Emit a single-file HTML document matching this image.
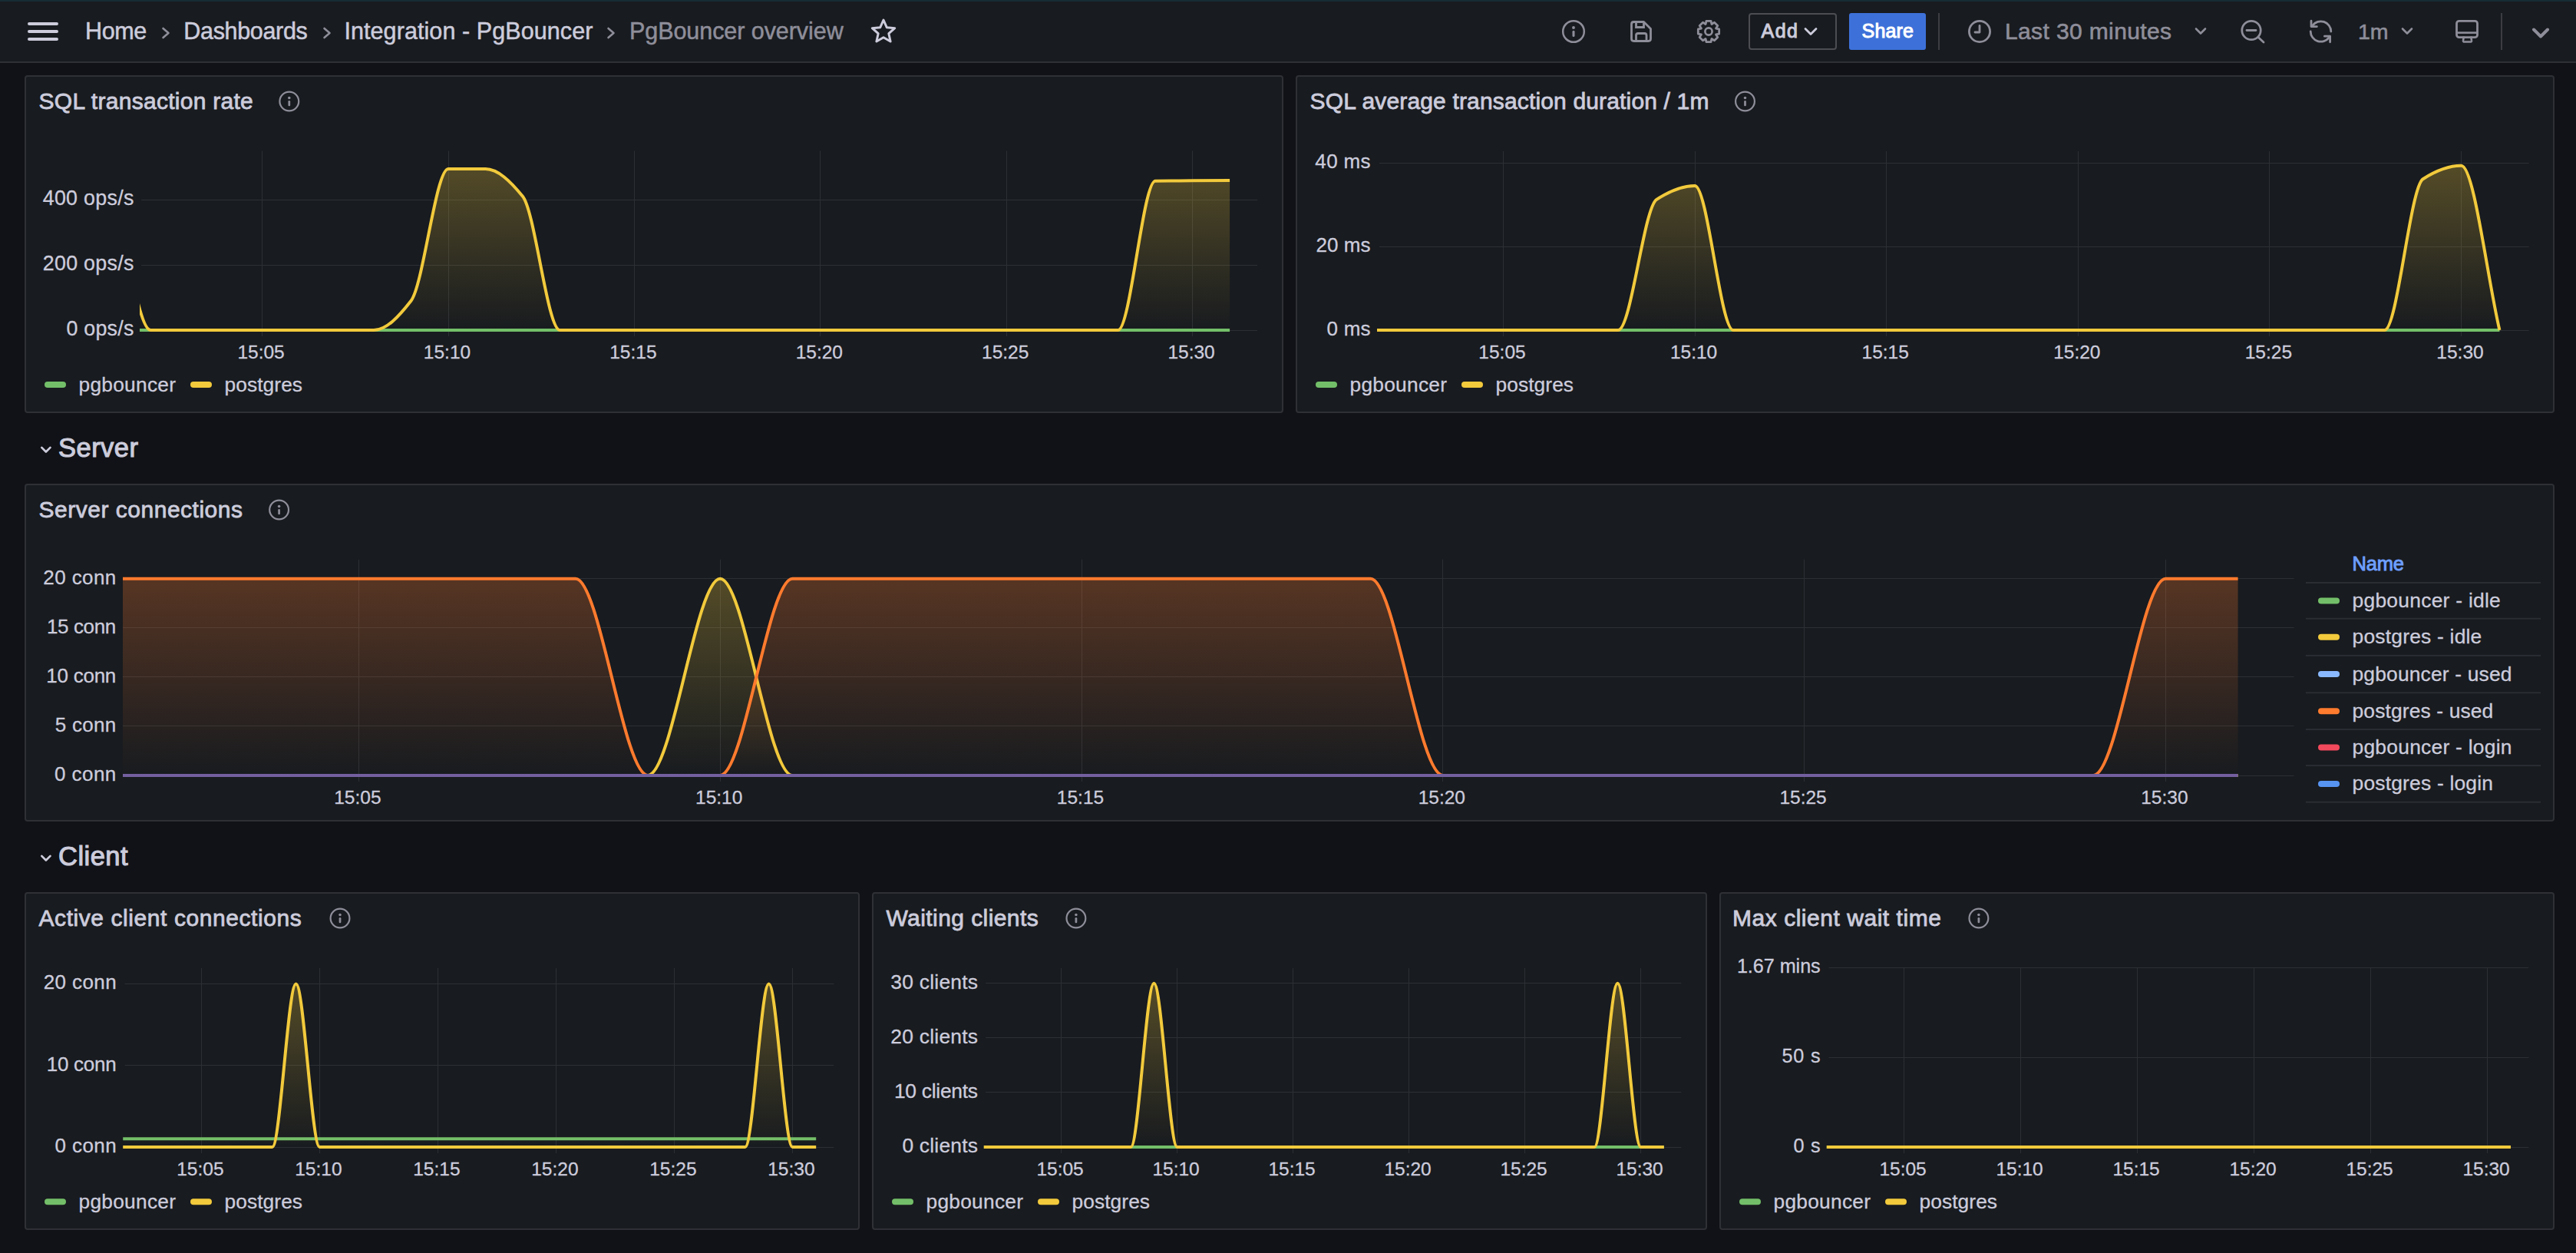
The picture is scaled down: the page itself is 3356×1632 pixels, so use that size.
<!DOCTYPE html>
<html><head><meta charset="utf-8"><title>PgBouncer overview - Dashboards - Grafana</title>
<style>
html,body{margin:0;padding:0;background:#111217;width:3356px;height:1632px;overflow:hidden;font-family:"Liberation Sans",sans-serif;}
</style></head><body>
<svg width="3356" height="1632" viewBox="0 0 3356 1632" style="position:absolute;left:0;top:0" font-family="'Liberation Sans', sans-serif"><defs><clipPath id="c1"><rect x="182" y="192.5" width="1456" height="241.5"/></clipPath><linearGradient id="g2" gradientUnits="userSpaceOnUse" x1="0" y1="196.5" x2="0" y2="430"><stop offset="0" stop-color="#73bf69" stop-opacity="0.3"/><stop offset="1" stop-color="#73bf69" stop-opacity="0"/></linearGradient><linearGradient id="g3" gradientUnits="userSpaceOnUse" x1="0" y1="196.5" x2="0" y2="430"><stop offset="0" stop-color="#f2ca3c" stop-opacity="0.3"/><stop offset="1" stop-color="#f2ca3c" stop-opacity="0"/></linearGradient><clipPath id="c4"><rect x="1794" y="193" width="1500.5" height="241"/></clipPath><linearGradient id="g5" gradientUnits="userSpaceOnUse" x1="0" y1="197" x2="0" y2="430"><stop offset="0" stop-color="#73bf69" stop-opacity="0.3"/><stop offset="1" stop-color="#73bf69" stop-opacity="0"/></linearGradient><linearGradient id="g6" gradientUnits="userSpaceOnUse" x1="0" y1="197" x2="0" y2="430"><stop offset="0" stop-color="#f2ca3c" stop-opacity="0.3"/><stop offset="1" stop-color="#f2ca3c" stop-opacity="0"/></linearGradient><clipPath id="c7"><rect x="160" y="724.7" width="2828.5" height="289.29999999999995"/></clipPath><linearGradient id="g8" gradientUnits="userSpaceOnUse" x1="0" y1="728.7" x2="0" y2="1010"><stop offset="0" stop-color="#f2ca3c" stop-opacity="0.3"/><stop offset="1" stop-color="#f2ca3c" stop-opacity="0"/></linearGradient><linearGradient id="g9" gradientUnits="userSpaceOnUse" x1="0" y1="728.7" x2="0" y2="1010"><stop offset="0" stop-color="#ff7b2e" stop-opacity="0.3"/><stop offset="1" stop-color="#ff7b2e" stop-opacity="0"/></linearGradient><clipPath id="c10"><rect x="160.2" y="1257" width="926.0999999999999" height="241"/></clipPath><linearGradient id="g11" gradientUnits="userSpaceOnUse" x1="0" y1="1261" x2="0" y2="1494"><stop offset="0" stop-color="#73bf69" stop-opacity="0.3"/><stop offset="1" stop-color="#73bf69" stop-opacity="0"/></linearGradient><linearGradient id="g12" gradientUnits="userSpaceOnUse" x1="0" y1="1261" x2="0" y2="1494"><stop offset="0" stop-color="#f2ca3c" stop-opacity="0.3"/><stop offset="1" stop-color="#f2ca3c" stop-opacity="0"/></linearGradient><clipPath id="c13"><rect x="1281.8" y="1257" width="908.5000000000002" height="241"/></clipPath><linearGradient id="g14" gradientUnits="userSpaceOnUse" x1="0" y1="1261" x2="0" y2="1494"><stop offset="0" stop-color="#73bf69" stop-opacity="0.3"/><stop offset="1" stop-color="#73bf69" stop-opacity="0"/></linearGradient><linearGradient id="g15" gradientUnits="userSpaceOnUse" x1="0" y1="1261" x2="0" y2="1494"><stop offset="0" stop-color="#f2ca3c" stop-opacity="0.3"/><stop offset="1" stop-color="#f2ca3c" stop-opacity="0"/></linearGradient><clipPath id="c16"><rect x="2379.8" y="1256" width="914.5" height="242"/></clipPath><linearGradient id="g17" gradientUnits="userSpaceOnUse" x1="0" y1="1260" x2="0" y2="1494"><stop offset="0" stop-color="#73bf69" stop-opacity="0.3"/><stop offset="1" stop-color="#73bf69" stop-opacity="0"/></linearGradient><linearGradient id="g18" gradientUnits="userSpaceOnUse" x1="0" y1="1260" x2="0" y2="1494"><stop offset="0" stop-color="#f2ca3c" stop-opacity="0.3"/><stop offset="1" stop-color="#f2ca3c" stop-opacity="0"/></linearGradient></defs><rect x="0" y="82" width="3356" height="1550" fill="#111217"/><rect x="33" y="99" width="1638" height="438" rx="3" ry="3" fill="#181b1f" stroke="#2e3036" stroke-width="2"/><text x="50.5" y="142.2" font-size="30" fill="#ccccdc" text-anchor="start" stroke="#ccccdc" stroke-width="0.8" textLength="279.3" lengthAdjust="spacing">SQL transaction rate</text><circle cx="376.8" cy="132" r="12.4" fill="none" stroke="#8e8e9a" stroke-width="2.2"/><circle cx="376.8" cy="127.56422764227642" r="1.76" fill="#8e8e9a"/><line x1="376.8" y1="132.30" x2="376.8" y2="136.94" stroke="#8e8e9a" stroke-width="2.72" stroke-linecap="round"/><rect x="1689" y="99" width="1638" height="438" rx="3" ry="3" fill="#181b1f" stroke="#2e3036" stroke-width="2"/><text x="1706.5" y="142.2" font-size="30" fill="#ccccdc" text-anchor="start" stroke="#ccccdc" stroke-width="0.8" textLength="519.9" lengthAdjust="spacing">SQL average transaction duration / 1m</text><circle cx="2273.5" cy="132" r="12.4" fill="none" stroke="#8e8e9a" stroke-width="2.2"/><circle cx="2273.5" cy="127.56422764227642" r="1.76" fill="#8e8e9a"/><line x1="2273.5" y1="132.30" x2="2273.5" y2="136.94" stroke="#8e8e9a" stroke-width="2.72" stroke-linecap="round"/><rect x="33" y="631" width="3294" height="438" rx="3" ry="3" fill="#181b1f" stroke="#2e3036" stroke-width="2"/><text x="50.5" y="674.2" font-size="30" fill="#ccccdc" text-anchor="start" stroke="#ccccdc" stroke-width="0.8" textLength="265.5" lengthAdjust="spacing">Server connections</text><circle cx="363.6" cy="664" r="12.4" fill="none" stroke="#8e8e9a" stroke-width="2.2"/><circle cx="363.6" cy="659.5642276422765" r="1.76" fill="#8e8e9a"/><line x1="363.6" y1="664.30" x2="363.6" y2="668.94" stroke="#8e8e9a" stroke-width="2.72" stroke-linecap="round"/><rect x="33" y="1163" width="1086" height="438" rx="3" ry="3" fill="#181b1f" stroke="#2e3036" stroke-width="2"/><text x="50.5" y="1206.2" font-size="30" fill="#ccccdc" text-anchor="start" stroke="#ccccdc" stroke-width="0.8" textLength="342.2" lengthAdjust="spacing">Active client connections</text><circle cx="443" cy="1196" r="12.4" fill="none" stroke="#8e8e9a" stroke-width="2.2"/><circle cx="443" cy="1191.5642276422764" r="1.76" fill="#8e8e9a"/><line x1="443" y1="1196.30" x2="443" y2="1200.94" stroke="#8e8e9a" stroke-width="2.72" stroke-linecap="round"/><rect x="1137" y="1163" width="1086" height="438" rx="3" ry="3" fill="#181b1f" stroke="#2e3036" stroke-width="2"/><text x="1154.5" y="1206.2" font-size="30" fill="#ccccdc" text-anchor="start" stroke="#ccccdc" stroke-width="0.8" textLength="198.2" lengthAdjust="spacing">Waiting clients</text><circle cx="1401.9" cy="1196" r="12.4" fill="none" stroke="#8e8e9a" stroke-width="2.2"/><circle cx="1401.9" cy="1191.5642276422764" r="1.76" fill="#8e8e9a"/><line x1="1401.9" y1="1196.30" x2="1401.9" y2="1200.94" stroke="#8e8e9a" stroke-width="2.72" stroke-linecap="round"/><rect x="2241" y="1163" width="1086" height="438" rx="3" ry="3" fill="#181b1f" stroke="#2e3036" stroke-width="2"/><text x="2257.0" y="1206.2" font-size="30" fill="#ccccdc" text-anchor="start" stroke="#ccccdc" stroke-width="0.8" textLength="271.9" lengthAdjust="spacing">Max client wait time</text><circle cx="2577.9" cy="1196" r="12.4" fill="none" stroke="#8e8e9a" stroke-width="2.2"/><circle cx="2577.9" cy="1191.5642276422764" r="1.76" fill="#8e8e9a"/><line x1="2577.9" y1="1196.30" x2="2577.9" y2="1200.94" stroke="#8e8e9a" stroke-width="2.72" stroke-linecap="round"/><path d="M54.3,582.9 L59.9,588.5 L65.5,582.9" fill="none" stroke="#ccccdc" stroke-width="2.7" stroke-linecap="round" stroke-linejoin="round"/><text x="76.0" y="595.2" font-size="34.5" fill="#ccccdc" text-anchor="start" stroke="#ccccdc" stroke-width="1.1" textLength="104" lengthAdjust="spacing">Server</text><path d="M54.3,1114.9 L59.9,1120.5 L65.5,1114.9" fill="none" stroke="#ccccdc" stroke-width="2.7" stroke-linecap="round" stroke-linejoin="round"/><text x="76.0" y="1127.2" font-size="34.5" fill="#ccccdc" text-anchor="start" stroke="#ccccdc" stroke-width="1.1" textLength="90.5" lengthAdjust="spacing">Client</text><line x1="184" y1="430.5" x2="1638" y2="430.5" stroke="#2c2f34" stroke-width="1"/><text x="174.3" y="436.8" font-size="26.8" fill="#ccccdc" text-anchor="end" stroke="#ccccdc" stroke-width="0.3" textLength="87.8" lengthAdjust="spacing">0 ops/s</text><line x1="184" y1="345.5" x2="1638" y2="345.5" stroke="#2c2f34" stroke-width="1"/><text x="174.3" y="351.8" font-size="26.8" fill="#ccccdc" text-anchor="end" stroke="#ccccdc" stroke-width="0.3" textLength="118.5" lengthAdjust="spacing">200 ops/s</text><line x1="184" y1="260.5" x2="1638" y2="260.5" stroke="#2c2f34" stroke-width="1"/><text x="174.3" y="266.8" font-size="26.8" fill="#ccccdc" text-anchor="end" stroke="#ccccdc" stroke-width="0.3" textLength="118.6" lengthAdjust="spacing">400 ops/s</text><line x1="341.5" y1="196.5" x2="341.5" y2="438" stroke="#2c2f34" stroke-width="1"/><text x="340.1" y="467.2" font-size="24.5" fill="#ccccdc" text-anchor="middle" stroke="#ccccdc" stroke-width="0.3">15:05</text><line x1="584.5" y1="196.5" x2="584.5" y2="438" stroke="#2c2f34" stroke-width="1"/><text x="582.5" y="467.2" font-size="24.5" fill="#ccccdc" text-anchor="middle" stroke="#ccccdc" stroke-width="0.3">15:10</text><line x1="826.5" y1="196.5" x2="826.5" y2="438" stroke="#2c2f34" stroke-width="1"/><text x="824.9" y="467.2" font-size="24.5" fill="#ccccdc" text-anchor="middle" stroke="#ccccdc" stroke-width="0.3">15:15</text><line x1="1068.5" y1="196.5" x2="1068.5" y2="438" stroke="#2c2f34" stroke-width="1"/><text x="1067.3" y="467.2" font-size="24.5" fill="#ccccdc" text-anchor="middle" stroke="#ccccdc" stroke-width="0.3">15:20</text><line x1="1311.5" y1="196.5" x2="1311.5" y2="438" stroke="#2c2f34" stroke-width="1"/><text x="1309.7" y="467.2" font-size="24.5" fill="#ccccdc" text-anchor="middle" stroke="#ccccdc" stroke-width="0.3">15:25</text><line x1="1553.5" y1="196.5" x2="1553.5" y2="438" stroke="#2c2f34" stroke-width="1"/><text x="1552.1" y="467.2" font-size="24.5" fill="#ccccdc" text-anchor="middle" stroke="#ccccdc" stroke-width="0.3">15:30</text><g clip-path="url(#c1)"><path d="M147.68,430.00C163.84,430.00 180.00,430.00 196.16,430.00C212.32,430.00 228.48,430.00 244.64,430.00C260.80,430.00 276.96,430.00 293.12,430.00C309.28,430.00 325.44,430.00 341.60,430.00C357.76,430.00 373.92,430.00 390.08,430.00C406.24,430.00 422.40,430.00 438.56,430.00C454.72,430.00 470.88,430.00 487.04,430.00C503.20,430.00 519.36,430.00 535.52,430.00C551.68,430.00 567.84,430.00 584.00,430.00C600.16,430.00 616.32,430.00 632.48,430.00C648.64,430.00 664.80,430.00 680.96,430.00C697.12,430.00 713.28,430.00 729.44,430.00C745.60,430.00 761.76,430.00 777.92,430.00C794.08,430.00 810.24,430.00 826.40,430.00C842.56,430.00 858.72,430.00 874.88,430.00C891.04,430.00 907.20,430.00 923.36,430.00C939.52,430.00 955.68,430.00 971.84,430.00C988.00,430.00 1004.16,430.00 1020.32,430.00C1036.48,430.00 1052.64,430.00 1068.80,430.00C1084.96,430.00 1101.12,430.00 1117.28,430.00C1133.44,430.00 1149.60,430.00 1165.76,430.00C1181.92,430.00 1198.08,430.00 1214.24,430.00C1230.40,430.00 1246.56,430.00 1262.72,430.00C1278.88,430.00 1295.04,430.00 1311.20,430.00C1327.36,430.00 1343.52,430.00 1359.68,430.00C1375.84,430.00 1392.00,430.00 1408.16,430.00C1424.32,430.00 1440.48,430.00 1456.64,430.00C1472.80,430.00 1488.96,430.00 1505.12,430.00C1521.28,430.00 1537.44,430.00 1553.60,430.00C1569.76,430.00 1585.92,430.00 1602.08,430.00L1602.08,430.00L147.68,430.00Z" fill="url(#g2)"/><path d="M147.68,430.00C163.84,430.00 180.00,430.00 196.16,430.00C212.32,430.00 228.48,430.00 244.64,430.00C260.80,430.00 276.96,430.00 293.12,430.00C309.28,430.00 325.44,430.00 341.60,430.00C357.76,430.00 373.92,430.00 390.08,430.00C406.24,430.00 422.40,430.00 438.56,430.00C454.72,430.00 470.88,430.00 487.04,430.00C503.20,430.00 519.36,430.00 535.52,430.00C551.68,430.00 567.84,430.00 584.00,430.00C600.16,430.00 616.32,430.00 632.48,430.00C648.64,430.00 664.80,430.00 680.96,430.00C697.12,430.00 713.28,430.00 729.44,430.00C745.60,430.00 761.76,430.00 777.92,430.00C794.08,430.00 810.24,430.00 826.40,430.00C842.56,430.00 858.72,430.00 874.88,430.00C891.04,430.00 907.20,430.00 923.36,430.00C939.52,430.00 955.68,430.00 971.84,430.00C988.00,430.00 1004.16,430.00 1020.32,430.00C1036.48,430.00 1052.64,430.00 1068.80,430.00C1084.96,430.00 1101.12,430.00 1117.28,430.00C1133.44,430.00 1149.60,430.00 1165.76,430.00C1181.92,430.00 1198.08,430.00 1214.24,430.00C1230.40,430.00 1246.56,430.00 1262.72,430.00C1278.88,430.00 1295.04,430.00 1311.20,430.00C1327.36,430.00 1343.52,430.00 1359.68,430.00C1375.84,430.00 1392.00,430.00 1408.16,430.00C1424.32,430.00 1440.48,430.00 1456.64,430.00C1472.80,430.00 1488.96,430.00 1505.12,430.00C1521.28,430.00 1537.44,430.00 1553.60,430.00C1569.76,430.00 1585.92,430.00 1602.08,430.00" fill="none" stroke="#73bf69" stroke-width="4" stroke-linejoin="round"/><path d="M147.68,243.00C163.84,305.33 180.00,430.00 196.16,430.00C212.32,430.00 228.48,430.00 244.64,430.00C260.80,430.00 276.96,430.00 293.12,430.00C309.28,430.00 325.44,430.00 341.60,430.00C357.76,430.00 373.92,430.00 390.08,430.00C406.24,430.00 422.40,430.00 438.56,430.00C454.72,430.00 470.88,430.00 487.04,430.00C503.20,430.00 519.36,412.60 535.52,391.75C551.68,370.90 567.84,220.05 584.00,220.05C600.16,220.05 616.32,220.05 632.48,220.05C648.64,220.05 664.80,236.00 680.96,255.75C697.12,275.50 713.28,430.00 729.44,430.00C745.60,430.00 761.76,430.00 777.92,430.00C794.08,430.00 810.24,430.00 826.40,430.00C842.56,430.00 858.72,430.00 874.88,430.00C891.04,430.00 907.20,430.00 923.36,430.00C939.52,430.00 955.68,430.00 971.84,430.00C988.00,430.00 1004.16,430.00 1020.32,430.00C1036.48,430.00 1052.64,430.00 1068.80,430.00C1084.96,430.00 1101.12,430.00 1117.28,430.00C1133.44,430.00 1149.60,430.00 1165.76,430.00C1181.92,430.00 1198.08,430.00 1214.24,430.00C1230.40,430.00 1246.56,430.00 1262.72,430.00C1278.88,430.00 1295.04,430.00 1311.20,430.00C1327.36,430.00 1343.52,430.00 1359.68,430.00C1375.84,430.00 1392.00,430.00 1408.16,430.00C1424.32,430.00 1440.48,430.00 1456.64,430.00C1472.80,430.00 1488.96,236.06 1505.12,235.78C1521.28,235.49 1537.44,235.49 1553.60,235.35C1569.76,235.21 1585.92,235.07 1602.08,234.93L1602.08,430.00L147.68,430.00Z" fill="url(#g3)"/><path d="M147.68,243.00C163.84,305.33 180.00,430.00 196.16,430.00C212.32,430.00 228.48,430.00 244.64,430.00C260.80,430.00 276.96,430.00 293.12,430.00C309.28,430.00 325.44,430.00 341.60,430.00C357.76,430.00 373.92,430.00 390.08,430.00C406.24,430.00 422.40,430.00 438.56,430.00C454.72,430.00 470.88,430.00 487.04,430.00C503.20,430.00 519.36,412.60 535.52,391.75C551.68,370.90 567.84,220.05 584.00,220.05C600.16,220.05 616.32,220.05 632.48,220.05C648.64,220.05 664.80,236.00 680.96,255.75C697.12,275.50 713.28,430.00 729.44,430.00C745.60,430.00 761.76,430.00 777.92,430.00C794.08,430.00 810.24,430.00 826.40,430.00C842.56,430.00 858.72,430.00 874.88,430.00C891.04,430.00 907.20,430.00 923.36,430.00C939.52,430.00 955.68,430.00 971.84,430.00C988.00,430.00 1004.16,430.00 1020.32,430.00C1036.48,430.00 1052.64,430.00 1068.80,430.00C1084.96,430.00 1101.12,430.00 1117.28,430.00C1133.44,430.00 1149.60,430.00 1165.76,430.00C1181.92,430.00 1198.08,430.00 1214.24,430.00C1230.40,430.00 1246.56,430.00 1262.72,430.00C1278.88,430.00 1295.04,430.00 1311.20,430.00C1327.36,430.00 1343.52,430.00 1359.68,430.00C1375.84,430.00 1392.00,430.00 1408.16,430.00C1424.32,430.00 1440.48,430.00 1456.64,430.00C1472.80,430.00 1488.96,236.06 1505.12,235.78C1521.28,235.49 1537.44,235.49 1553.60,235.35C1569.76,235.21 1585.92,235.07 1602.08,234.93" fill="none" stroke="#f2ca3c" stroke-width="4" stroke-linejoin="round"/></g><rect x="58" y="497" width="28" height="8" rx="4" ry="4" fill="#73bf69"/><text x="102.5" y="509.5" font-size="26.3" fill="#ccccdc" text-anchor="start" stroke="#ccccdc" stroke-width="0.3" textLength="126.5" lengthAdjust="spacing">pgbouncer</text><rect x="248" y="497" width="28" height="8" rx="4" ry="4" fill="#f2ca3c"/><text x="292.5" y="509.5" font-size="26.3" fill="#ccccdc" text-anchor="start" stroke="#ccccdc" stroke-width="0.3" textLength="101.5" lengthAdjust="spacing">postgres</text><line x1="1797" y1="430.5" x2="3294.5" y2="430.5" stroke="#2c2f34" stroke-width="1"/><text x="1785.6" y="436.8" font-size="26" fill="#ccccdc" text-anchor="end" stroke="#ccccdc" stroke-width="0.3" textLength="57.2" lengthAdjust="spacing">0 ms</text><line x1="1797" y1="321.5" x2="3294.5" y2="321.5" stroke="#2c2f34" stroke-width="1"/><text x="1785.6" y="328.1" font-size="26" fill="#ccccdc" text-anchor="end" stroke="#ccccdc" stroke-width="0.3" textLength="71.2" lengthAdjust="spacing">20 ms</text><line x1="1797" y1="212.5" x2="3294.5" y2="212.5" stroke="#2c2f34" stroke-width="1"/><text x="1785.6" y="219.4" font-size="26" fill="#ccccdc" text-anchor="end" stroke="#ccccdc" stroke-width="0.3" textLength="72.3" lengthAdjust="spacing">40 ms</text><line x1="1958.5" y1="197" x2="1958.5" y2="438" stroke="#2c2f34" stroke-width="1"/><text x="1957.0" y="467.2" font-size="24.5" fill="#ccccdc" text-anchor="middle" stroke="#ccccdc" stroke-width="0.3">15:05</text><line x1="2208.5" y1="197" x2="2208.5" y2="438" stroke="#2c2f34" stroke-width="1"/><text x="2206.6" y="467.2" font-size="24.5" fill="#ccccdc" text-anchor="middle" stroke="#ccccdc" stroke-width="0.3">15:10</text><line x1="2457.5" y1="197" x2="2457.5" y2="438" stroke="#2c2f34" stroke-width="1"/><text x="2456.2" y="467.2" font-size="24.5" fill="#ccccdc" text-anchor="middle" stroke="#ccccdc" stroke-width="0.3">15:15</text><line x1="2707.5" y1="197" x2="2707.5" y2="438" stroke="#2c2f34" stroke-width="1"/><text x="2705.8" y="467.2" font-size="24.5" fill="#ccccdc" text-anchor="middle" stroke="#ccccdc" stroke-width="0.3">15:20</text><line x1="2956.5" y1="197" x2="2956.5" y2="438" stroke="#2c2f34" stroke-width="1"/><text x="2955.4" y="467.2" font-size="24.5" fill="#ccccdc" text-anchor="middle" stroke="#ccccdc" stroke-width="0.3">15:25</text><line x1="3206.5" y1="197" x2="3206.5" y2="438" stroke="#2c2f34" stroke-width="1"/><text x="3205.0" y="467.2" font-size="24.5" fill="#ccccdc" text-anchor="middle" stroke="#ccccdc" stroke-width="0.3">15:30</text><g clip-path="url(#c4)"><path d="M1758.82,430.00C1775.46,430.00 1792.10,430.00 1808.74,430.00C1825.38,430.00 1842.02,430.00 1858.66,430.00C1875.30,430.00 1891.94,430.00 1908.58,430.00C1925.22,430.00 1941.86,430.00 1958.50,430.00C1975.14,430.00 1991.78,430.00 2008.42,430.00C2025.06,430.00 2041.70,430.00 2058.34,430.00C2074.98,430.00 2091.62,430.00 2108.26,430.00C2124.90,430.00 2141.54,430.00 2158.18,430.00C2174.82,430.00 2191.46,430.00 2208.10,430.00C2224.74,430.00 2241.38,430.00 2258.02,430.00C2274.66,430.00 2291.30,430.00 2307.94,430.00C2324.58,430.00 2341.22,430.00 2357.86,430.00C2374.50,430.00 2391.14,430.00 2407.78,430.00C2424.42,430.00 2441.06,430.00 2457.70,430.00C2474.34,430.00 2490.98,430.00 2507.62,430.00C2524.26,430.00 2540.90,430.00 2557.54,430.00C2574.18,430.00 2590.82,430.00 2607.46,430.00C2624.10,430.00 2640.74,430.00 2657.38,430.00C2674.02,430.00 2690.66,430.00 2707.30,430.00C2723.94,430.00 2740.58,430.00 2757.22,430.00C2773.86,430.00 2790.50,430.00 2807.14,430.00C2823.78,430.00 2840.42,430.00 2857.06,430.00C2873.70,430.00 2890.34,430.00 2906.98,430.00C2923.62,430.00 2940.26,430.00 2956.90,430.00C2973.54,430.00 2990.18,430.00 3006.82,430.00C3023.46,430.00 3040.10,430.00 3056.74,430.00C3073.38,430.00 3090.02,430.00 3106.66,430.00C3123.30,430.00 3139.94,430.00 3156.58,430.00C3173.22,430.00 3189.86,430.00 3206.50,430.00C3223.14,430.00 3239.78,430.00 3256.42,430.00L3256.42,430.00L1758.82,430.00Z" fill="url(#g5)"/><path d="M1758.82,430.00C1775.46,430.00 1792.10,430.00 1808.74,430.00C1825.38,430.00 1842.02,430.00 1858.66,430.00C1875.30,430.00 1891.94,430.00 1908.58,430.00C1925.22,430.00 1941.86,430.00 1958.50,430.00C1975.14,430.00 1991.78,430.00 2008.42,430.00C2025.06,430.00 2041.70,430.00 2058.34,430.00C2074.98,430.00 2091.62,430.00 2108.26,430.00C2124.90,430.00 2141.54,430.00 2158.18,430.00C2174.82,430.00 2191.46,430.00 2208.10,430.00C2224.74,430.00 2241.38,430.00 2258.02,430.00C2274.66,430.00 2291.30,430.00 2307.94,430.00C2324.58,430.00 2341.22,430.00 2357.86,430.00C2374.50,430.00 2391.14,430.00 2407.78,430.00C2424.42,430.00 2441.06,430.00 2457.70,430.00C2474.34,430.00 2490.98,430.00 2507.62,430.00C2524.26,430.00 2540.90,430.00 2557.54,430.00C2574.18,430.00 2590.82,430.00 2607.46,430.00C2624.10,430.00 2640.74,430.00 2657.38,430.00C2674.02,430.00 2690.66,430.00 2707.30,430.00C2723.94,430.00 2740.58,430.00 2757.22,430.00C2773.86,430.00 2790.50,430.00 2807.14,430.00C2823.78,430.00 2840.42,430.00 2857.06,430.00C2873.70,430.00 2890.34,430.00 2906.98,430.00C2923.62,430.00 2940.26,430.00 2956.90,430.00C2973.54,430.00 2990.18,430.00 3006.82,430.00C3023.46,430.00 3040.10,430.00 3056.74,430.00C3073.38,430.00 3090.02,430.00 3106.66,430.00C3123.30,430.00 3139.94,430.00 3156.58,430.00C3173.22,430.00 3189.86,430.00 3206.50,430.00C3223.14,430.00 3239.78,430.00 3256.42,430.00" fill="none" stroke="#73bf69" stroke-width="4" stroke-linejoin="round"/><path d="M1758.82,430.00C1775.46,430.00 1792.10,430.00 1808.74,430.00C1825.38,430.00 1842.02,430.00 1858.66,430.00C1875.30,430.00 1891.94,430.00 1908.58,430.00C1925.22,430.00 1941.86,430.00 1958.50,430.00C1975.14,430.00 1991.78,430.00 2008.42,430.00C2025.06,430.00 2041.70,430.00 2058.34,430.00C2074.98,430.00 2091.62,430.00 2108.26,430.00C2124.90,430.00 2141.54,270.70 2158.18,259.88C2174.82,249.07 2191.46,241.95 2208.10,241.95C2224.74,241.95 2241.38,430.00 2258.02,430.00C2274.66,430.00 2291.30,430.00 2307.94,430.00C2324.58,430.00 2341.22,430.00 2357.86,430.00C2374.50,430.00 2391.14,430.00 2407.78,430.00C2424.42,430.00 2441.06,430.00 2457.70,430.00C2474.34,430.00 2490.98,430.00 2507.62,430.00C2524.26,430.00 2540.90,430.00 2557.54,430.00C2574.18,430.00 2590.82,430.00 2607.46,430.00C2624.10,430.00 2640.74,430.00 2657.38,430.00C2674.02,430.00 2690.66,430.00 2707.30,430.00C2723.94,430.00 2740.58,430.00 2757.22,430.00C2773.86,430.00 2790.50,430.00 2807.14,430.00C2823.78,430.00 2840.42,430.00 2857.06,430.00C2873.70,430.00 2890.34,430.00 2906.98,430.00C2923.62,430.00 2940.26,430.00 2956.90,430.00C2973.54,430.00 2990.18,430.00 3006.82,430.00C3023.46,430.00 3040.10,430.00 3056.74,430.00C3073.38,430.00 3090.02,430.00 3106.66,430.00C3123.30,430.00 3139.94,243.91 3156.58,233.25C3173.22,222.60 3189.86,215.86 3206.50,215.86C3223.14,215.86 3239.78,358.62 3256.42,430.00L3256.42,430.00L1758.82,430.00Z" fill="url(#g6)"/><path d="M1758.82,430.00C1775.46,430.00 1792.10,430.00 1808.74,430.00C1825.38,430.00 1842.02,430.00 1858.66,430.00C1875.30,430.00 1891.94,430.00 1908.58,430.00C1925.22,430.00 1941.86,430.00 1958.50,430.00C1975.14,430.00 1991.78,430.00 2008.42,430.00C2025.06,430.00 2041.70,430.00 2058.34,430.00C2074.98,430.00 2091.62,430.00 2108.26,430.00C2124.90,430.00 2141.54,270.70 2158.18,259.88C2174.82,249.07 2191.46,241.95 2208.10,241.95C2224.74,241.95 2241.38,430.00 2258.02,430.00C2274.66,430.00 2291.30,430.00 2307.94,430.00C2324.58,430.00 2341.22,430.00 2357.86,430.00C2374.50,430.00 2391.14,430.00 2407.78,430.00C2424.42,430.00 2441.06,430.00 2457.70,430.00C2474.34,430.00 2490.98,430.00 2507.62,430.00C2524.26,430.00 2540.90,430.00 2557.54,430.00C2574.18,430.00 2590.82,430.00 2607.46,430.00C2624.10,430.00 2640.74,430.00 2657.38,430.00C2674.02,430.00 2690.66,430.00 2707.30,430.00C2723.94,430.00 2740.58,430.00 2757.22,430.00C2773.86,430.00 2790.50,430.00 2807.14,430.00C2823.78,430.00 2840.42,430.00 2857.06,430.00C2873.70,430.00 2890.34,430.00 2906.98,430.00C2923.62,430.00 2940.26,430.00 2956.90,430.00C2973.54,430.00 2990.18,430.00 3006.82,430.00C3023.46,430.00 3040.10,430.00 3056.74,430.00C3073.38,430.00 3090.02,430.00 3106.66,430.00C3123.30,430.00 3139.94,243.91 3156.58,233.25C3173.22,222.60 3189.86,215.86 3206.50,215.86C3223.14,215.86 3239.78,358.62 3256.42,430.00" fill="none" stroke="#f2ca3c" stroke-width="4" stroke-linejoin="round"/></g><rect x="1714" y="497" width="28" height="8" rx="4" ry="4" fill="#73bf69"/><text x="1758.5" y="509.5" font-size="26.3" fill="#ccccdc" text-anchor="start" stroke="#ccccdc" stroke-width="0.3" textLength="126.5" lengthAdjust="spacing">pgbouncer</text><rect x="1904" y="497" width="28" height="8" rx="4" ry="4" fill="#f2ca3c"/><text x="1948.5" y="509.5" font-size="26.3" fill="#ccccdc" text-anchor="start" stroke="#ccccdc" stroke-width="0.3" textLength="101.5" lengthAdjust="spacing">postgres</text><line x1="160" y1="1010.5" x2="2988.5" y2="1010.5" stroke="#2c2f34" stroke-width="1"/><text x="151.3" y="1016.8" font-size="26" fill="#ccccdc" text-anchor="end" stroke="#ccccdc" stroke-width="0.3" textLength="80.3" lengthAdjust="spacing">0 conn</text><line x1="160" y1="945.5" x2="2988.5" y2="945.5" stroke="#2c2f34" stroke-width="1"/><text x="151.3" y="952.8" font-size="26" fill="#ccccdc" text-anchor="end" stroke="#ccccdc" stroke-width="0.3" textLength="79.5" lengthAdjust="spacing">5 conn</text><line x1="160" y1="881.5" x2="2988.5" y2="881.5" stroke="#2c2f34" stroke-width="1"/><text x="151.3" y="888.7" font-size="26" fill="#ccccdc" text-anchor="end" stroke="#ccccdc" stroke-width="0.3" textLength="91.0" lengthAdjust="spacing">10 conn</text><line x1="160" y1="817.5" x2="2988.5" y2="817.5" stroke="#2c2f34" stroke-width="1"/><text x="151.3" y="824.6" font-size="26" fill="#ccccdc" text-anchor="end" stroke="#ccccdc" stroke-width="0.3" textLength="90.4" lengthAdjust="spacing">15 conn</text><line x1="160" y1="753.5" x2="2988.5" y2="753.5" stroke="#2c2f34" stroke-width="1"/><text x="151.3" y="760.6" font-size="26" fill="#ccccdc" text-anchor="end" stroke="#ccccdc" stroke-width="0.3" textLength="95.0" lengthAdjust="spacing">20 conn</text><line x1="467.5" y1="728.7" x2="467.5" y2="1018" stroke="#2c2f34" stroke-width="1"/><text x="465.9" y="1047.2" font-size="24.5" fill="#ccccdc" text-anchor="middle" stroke="#ccccdc" stroke-width="0.3">15:05</text><line x1="938.5" y1="728.7" x2="938.5" y2="1018" stroke="#2c2f34" stroke-width="1"/><text x="936.7" y="1047.2" font-size="24.5" fill="#ccccdc" text-anchor="middle" stroke="#ccccdc" stroke-width="0.3">15:10</text><line x1="1409.5" y1="728.7" x2="1409.5" y2="1018" stroke="#2c2f34" stroke-width="1"/><text x="1407.5" y="1047.2" font-size="24.5" fill="#ccccdc" text-anchor="middle" stroke="#ccccdc" stroke-width="0.3">15:15</text><line x1="1879.5" y1="728.7" x2="1879.5" y2="1018" stroke="#2c2f34" stroke-width="1"/><text x="1878.3" y="1047.2" font-size="24.5" fill="#ccccdc" text-anchor="middle" stroke="#ccccdc" stroke-width="0.3">15:20</text><line x1="2350.5" y1="728.7" x2="2350.5" y2="1018" stroke="#2c2f34" stroke-width="1"/><text x="2349.1" y="1047.2" font-size="24.5" fill="#ccccdc" text-anchor="middle" stroke="#ccccdc" stroke-width="0.3">15:25</text><line x1="2821.5" y1="728.7" x2="2821.5" y2="1018" stroke="#2c2f34" stroke-width="1"/><text x="2819.9" y="1047.2" font-size="24.5" fill="#ccccdc" text-anchor="middle" stroke="#ccccdc" stroke-width="0.3">15:30</text><g clip-path="url(#c7)"><path d="M90.76,1010.00C122.15,1010.00 153.53,1010.00 184.92,1010.00C216.31,1010.00 247.69,1010.00 279.08,1010.00C310.47,1010.00 341.85,1010.00 373.24,1010.00C404.63,1010.00 436.01,1010.00 467.40,1010.00C498.79,1010.00 530.17,1010.00 561.56,1010.00C592.95,1010.00 624.33,1010.00 655.72,1010.00C687.11,1010.00 718.49,1010.00 749.88,1010.00C781.27,1010.00 812.65,1010.00 844.04,1010.00C875.43,1010.00 906.81,753.80 938.20,753.80C969.59,753.80 1000.97,1010.00 1032.36,1010.00C1063.75,1010.00 1095.13,1010.00 1126.52,1010.00C1157.91,1010.00 1189.29,1010.00 1220.68,1010.00C1252.07,1010.00 1283.45,1010.00 1314.84,1010.00C1346.23,1010.00 1377.61,1010.00 1409.00,1010.00C1440.39,1010.00 1471.77,1010.00 1503.16,1010.00C1534.55,1010.00 1565.93,1010.00 1597.32,1010.00C1628.71,1010.00 1660.09,1010.00 1691.48,1010.00C1722.87,1010.00 1754.25,1010.00 1785.64,1010.00C1817.03,1010.00 1848.41,1010.00 1879.80,1010.00C1911.19,1010.00 1942.57,1010.00 1973.96,1010.00C2005.35,1010.00 2036.73,1010.00 2068.12,1010.00C2099.51,1010.00 2130.89,1010.00 2162.28,1010.00C2193.67,1010.00 2225.05,1010.00 2256.44,1010.00C2287.83,1010.00 2319.21,1010.00 2350.60,1010.00C2381.99,1010.00 2413.37,1010.00 2444.76,1010.00C2476.15,1010.00 2507.53,1010.00 2538.92,1010.00C2570.31,1010.00 2601.69,1010.00 2633.08,1010.00C2664.47,1010.00 2695.85,1010.00 2727.24,1010.00C2758.63,1010.00 2790.01,1010.00 2821.40,1010.00C2852.79,1010.00 2884.17,1010.00 2915.56,1010.00L2915.56,1010.00L90.76,1010.00Z" fill="url(#g8)"/><path d="M90.76,1010.00C122.15,1010.00 153.53,1010.00 184.92,1010.00C216.31,1010.00 247.69,1010.00 279.08,1010.00C310.47,1010.00 341.85,1010.00 373.24,1010.00C404.63,1010.00 436.01,1010.00 467.40,1010.00C498.79,1010.00 530.17,1010.00 561.56,1010.00C592.95,1010.00 624.33,1010.00 655.72,1010.00C687.11,1010.00 718.49,1010.00 749.88,1010.00C781.27,1010.00 812.65,1010.00 844.04,1010.00C875.43,1010.00 906.81,753.80 938.20,753.80C969.59,753.80 1000.97,1010.00 1032.36,1010.00C1063.75,1010.00 1095.13,1010.00 1126.52,1010.00C1157.91,1010.00 1189.29,1010.00 1220.68,1010.00C1252.07,1010.00 1283.45,1010.00 1314.84,1010.00C1346.23,1010.00 1377.61,1010.00 1409.00,1010.00C1440.39,1010.00 1471.77,1010.00 1503.16,1010.00C1534.55,1010.00 1565.93,1010.00 1597.32,1010.00C1628.71,1010.00 1660.09,1010.00 1691.48,1010.00C1722.87,1010.00 1754.25,1010.00 1785.64,1010.00C1817.03,1010.00 1848.41,1010.00 1879.80,1010.00C1911.19,1010.00 1942.57,1010.00 1973.96,1010.00C2005.35,1010.00 2036.73,1010.00 2068.12,1010.00C2099.51,1010.00 2130.89,1010.00 2162.28,1010.00C2193.67,1010.00 2225.05,1010.00 2256.44,1010.00C2287.83,1010.00 2319.21,1010.00 2350.60,1010.00C2381.99,1010.00 2413.37,1010.00 2444.76,1010.00C2476.15,1010.00 2507.53,1010.00 2538.92,1010.00C2570.31,1010.00 2601.69,1010.00 2633.08,1010.00C2664.47,1010.00 2695.85,1010.00 2727.24,1010.00C2758.63,1010.00 2790.01,1010.00 2821.40,1010.00C2852.79,1010.00 2884.17,1010.00 2915.56,1010.00" fill="none" stroke="#f2ca3c" stroke-width="4" stroke-linejoin="round"/><path d="M90.76,753.80C122.15,753.80 153.53,753.80 184.92,753.80C216.31,753.80 247.69,753.80 279.08,753.80C310.47,753.80 341.85,753.80 373.24,753.80C404.63,753.80 436.01,753.80 467.40,753.80C498.79,753.80 530.17,753.80 561.56,753.80C592.95,753.80 624.33,753.80 655.72,753.80C687.11,753.80 718.49,753.80 749.88,753.80C781.27,753.80 812.65,1010.00 844.04,1010.00C875.43,1010.00 906.81,1010.00 938.20,1010.00C969.59,1010.00 1000.97,753.80 1032.36,753.80C1063.75,753.80 1095.13,753.80 1126.52,753.80C1157.91,753.80 1189.29,753.80 1220.68,753.80C1252.07,753.80 1283.45,753.80 1314.84,753.80C1346.23,753.80 1377.61,753.80 1409.00,753.80C1440.39,753.80 1471.77,753.80 1503.16,753.80C1534.55,753.80 1565.93,753.80 1597.32,753.80C1628.71,753.80 1660.09,753.80 1691.48,753.80C1722.87,753.80 1754.25,753.80 1785.64,753.80C1817.03,753.80 1848.41,1010.00 1879.80,1010.00C1911.19,1010.00 1942.57,1010.00 1973.96,1010.00C2005.35,1010.00 2036.73,1010.00 2068.12,1010.00C2099.51,1010.00 2130.89,1010.00 2162.28,1010.00C2193.67,1010.00 2225.05,1010.00 2256.44,1010.00C2287.83,1010.00 2319.21,1010.00 2350.60,1010.00C2381.99,1010.00 2413.37,1010.00 2444.76,1010.00C2476.15,1010.00 2507.53,1010.00 2538.92,1010.00C2570.31,1010.00 2601.69,1010.00 2633.08,1010.00C2664.47,1010.00 2695.85,1010.00 2727.24,1010.00C2758.63,1010.00 2790.01,753.80 2821.40,753.80C2852.79,753.80 2884.17,753.80 2915.56,753.80L2915.56,1010.00L90.76,1010.00Z" fill="url(#g9)"/><path d="M90.76,753.80C122.15,753.80 153.53,753.80 184.92,753.80C216.31,753.80 247.69,753.80 279.08,753.80C310.47,753.80 341.85,753.80 373.24,753.80C404.63,753.80 436.01,753.80 467.40,753.80C498.79,753.80 530.17,753.80 561.56,753.80C592.95,753.80 624.33,753.80 655.72,753.80C687.11,753.80 718.49,753.80 749.88,753.80C781.27,753.80 812.65,1010.00 844.04,1010.00C875.43,1010.00 906.81,1010.00 938.20,1010.00C969.59,1010.00 1000.97,753.80 1032.36,753.80C1063.75,753.80 1095.13,753.80 1126.52,753.80C1157.91,753.80 1189.29,753.80 1220.68,753.80C1252.07,753.80 1283.45,753.80 1314.84,753.80C1346.23,753.80 1377.61,753.80 1409.00,753.80C1440.39,753.80 1471.77,753.80 1503.16,753.80C1534.55,753.80 1565.93,753.80 1597.32,753.80C1628.71,753.80 1660.09,753.80 1691.48,753.80C1722.87,753.80 1754.25,753.80 1785.64,753.80C1817.03,753.80 1848.41,1010.00 1879.80,1010.00C1911.19,1010.00 1942.57,1010.00 1973.96,1010.00C2005.35,1010.00 2036.73,1010.00 2068.12,1010.00C2099.51,1010.00 2130.89,1010.00 2162.28,1010.00C2193.67,1010.00 2225.05,1010.00 2256.44,1010.00C2287.83,1010.00 2319.21,1010.00 2350.60,1010.00C2381.99,1010.00 2413.37,1010.00 2444.76,1010.00C2476.15,1010.00 2507.53,1010.00 2538.92,1010.00C2570.31,1010.00 2601.69,1010.00 2633.08,1010.00C2664.47,1010.00 2695.85,1010.00 2727.24,1010.00C2758.63,1010.00 2790.01,753.80 2821.40,753.80C2852.79,753.80 2884.17,753.80 2915.56,753.80" fill="none" stroke="#ff7b2e" stroke-width="4" stroke-linejoin="round"/><line x1="160" y1="1010" x2="2915.56" y2="1010" stroke="#7360a0" stroke-width="4"/></g><text x="3064.5" y="743.4" font-size="25.5" fill="#6e9fff" text-anchor="start" stroke="#6e9fff" stroke-width="0.9" textLength="67.5" lengthAdjust="spacing">Name</text><rect x="3004" y="758.0" width="306" height="2" fill="#2a2d32"/><rect x="3004" y="804.7" width="306" height="2" fill="#2a2d32"/><rect x="3004" y="852.9" width="306" height="2" fill="#2a2d32"/><rect x="3004" y="901.3" width="306" height="2" fill="#2a2d32"/><rect x="3004" y="949.1" width="306" height="2" fill="#2a2d32"/><rect x="3004" y="996.1" width="306" height="2" fill="#2a2d32"/><rect x="3004" y="1043.7" width="306" height="2" fill="#2a2d32"/><rect x="3020" y="778.4" width="28" height="8" rx="4" fill="#73bf69"/><text x="3064.5" y="790.9" font-size="26.4" fill="#ccccdc" text-anchor="start" stroke="#ccccdc" stroke-width="0.3" textLength="193.29999999999998" lengthAdjust="spacing">pgbouncer - idle</text><rect x="3020" y="825.8" width="28" height="8" rx="4" fill="#f2ca3c"/><text x="3064.5" y="838.3" font-size="26.4" fill="#ccccdc" text-anchor="start" stroke="#ccccdc" stroke-width="0.3" textLength="168.79999999999998" lengthAdjust="spacing">postgres - idle</text><rect x="3020" y="874.1" width="28" height="8" rx="4" fill="#8ab8ff"/><text x="3064.5" y="886.6" font-size="26.4" fill="#ccccdc" text-anchor="start" stroke="#ccccdc" stroke-width="0.3" textLength="208.0" lengthAdjust="spacing">pgbouncer - used</text><rect x="3020" y="922.2" width="28" height="8" rx="4" fill="#ff7b2e"/><text x="3064.5" y="934.7" font-size="26.4" fill="#ccccdc" text-anchor="start" stroke="#ccccdc" stroke-width="0.3" textLength="183.79999999999998" lengthAdjust="spacing">postgres - used</text><rect x="3020" y="969.6" width="28" height="8" rx="4" fill="#f2495c"/><text x="3064.5" y="982.1" font-size="26.4" fill="#ccccdc" text-anchor="start" stroke="#ccccdc" stroke-width="0.3" textLength="208.0" lengthAdjust="spacing">pgbouncer - login</text><rect x="3020" y="1016.9" width="28" height="8" rx="4" fill="#5794f2"/><text x="3064.5" y="1029.4" font-size="26.4" fill="#ccccdc" text-anchor="start" stroke="#ccccdc" stroke-width="0.3" textLength="183.5" lengthAdjust="spacing">postgres - login</text><line x1="162.7" y1="1494.5" x2="1086.3" y2="1494.5" stroke="#2c2f34" stroke-width="1"/><text x="151.7" y="1500.8" font-size="26" fill="#ccccdc" text-anchor="end" stroke="#ccccdc" stroke-width="0.3" textLength="80.3" lengthAdjust="spacing">0 conn</text><line x1="162.7" y1="1387.5" x2="1086.3" y2="1387.5" stroke="#2c2f34" stroke-width="1"/><text x="151.7" y="1394.5" font-size="26" fill="#ccccdc" text-anchor="end" stroke="#ccccdc" stroke-width="0.3" textLength="91.0" lengthAdjust="spacing">10 conn</text><line x1="162.7" y1="1281.5" x2="1086.3" y2="1281.5" stroke="#2c2f34" stroke-width="1"/><text x="151.7" y="1288.2" font-size="26" fill="#ccccdc" text-anchor="end" stroke="#ccccdc" stroke-width="0.3" textLength="95.0" lengthAdjust="spacing">20 conn</text><line x1="262.5" y1="1261" x2="262.5" y2="1502" stroke="#2c2f34" stroke-width="1"/><text x="260.9" y="1531.2" font-size="24.5" fill="#ccccdc" text-anchor="middle" stroke="#ccccdc" stroke-width="0.3">15:05</text><line x1="416.5" y1="1261" x2="416.5" y2="1502" stroke="#2c2f34" stroke-width="1"/><text x="414.9" y="1531.2" font-size="24.5" fill="#ccccdc" text-anchor="middle" stroke="#ccccdc" stroke-width="0.3">15:10</text><line x1="570.5" y1="1261" x2="570.5" y2="1502" stroke="#2c2f34" stroke-width="1"/><text x="568.9" y="1531.2" font-size="24.5" fill="#ccccdc" text-anchor="middle" stroke="#ccccdc" stroke-width="0.3">15:15</text><line x1="724.5" y1="1261" x2="724.5" y2="1502" stroke="#2c2f34" stroke-width="1"/><text x="722.9" y="1531.2" font-size="24.5" fill="#ccccdc" text-anchor="middle" stroke="#ccccdc" stroke-width="0.3">15:20</text><line x1="878.5" y1="1261" x2="878.5" y2="1502" stroke="#2c2f34" stroke-width="1"/><text x="876.9" y="1531.2" font-size="24.5" fill="#ccccdc" text-anchor="middle" stroke="#ccccdc" stroke-width="0.3">15:25</text><line x1="1032.5" y1="1261" x2="1032.5" y2="1502" stroke="#2c2f34" stroke-width="1"/><text x="1030.9" y="1531.2" font-size="24.5" fill="#ccccdc" text-anchor="middle" stroke="#ccccdc" stroke-width="0.3">15:30</text><g clip-path="url(#c10)"><path d="M139.20,1483.37C149.47,1483.37 159.73,1483.37 170.00,1483.37C180.27,1483.37 190.53,1483.37 200.80,1483.37C211.07,1483.37 221.33,1483.37 231.60,1483.37C241.87,1483.37 252.13,1483.37 262.40,1483.37C272.67,1483.37 282.93,1483.37 293.20,1483.37C303.47,1483.37 313.73,1483.37 324.00,1483.37C334.27,1483.37 344.53,1483.37 354.80,1483.37C365.07,1483.37 375.33,1483.37 385.60,1483.37C395.87,1483.37 406.13,1483.37 416.40,1483.37C426.67,1483.37 436.93,1483.37 447.20,1483.37C457.47,1483.37 467.73,1483.37 478.00,1483.37C488.27,1483.37 498.53,1483.37 508.80,1483.37C519.07,1483.37 529.33,1483.37 539.60,1483.37C549.87,1483.37 560.13,1483.37 570.40,1483.37C580.67,1483.37 590.93,1483.37 601.20,1483.37C611.47,1483.37 621.73,1483.37 632.00,1483.37C642.27,1483.37 652.53,1483.37 662.80,1483.37C673.07,1483.37 683.33,1483.37 693.60,1483.37C703.87,1483.37 714.13,1483.37 724.40,1483.37C734.67,1483.37 744.93,1483.37 755.20,1483.37C765.47,1483.37 775.73,1483.37 786.00,1483.37C796.27,1483.37 806.53,1483.37 816.80,1483.37C827.07,1483.37 837.33,1483.37 847.60,1483.37C857.87,1483.37 868.13,1483.37 878.40,1483.37C888.67,1483.37 898.93,1483.37 909.20,1483.37C919.47,1483.37 929.73,1483.37 940.00,1483.37C950.27,1483.37 960.53,1483.37 970.80,1483.37C981.07,1483.37 991.33,1483.37 1001.60,1483.37C1011.87,1483.37 1022.13,1483.37 1032.40,1483.37C1042.67,1483.37 1052.93,1483.37 1063.20,1483.37L1063.20,1494.00L139.20,1494.00Z" fill="url(#g11)"/><path d="M139.20,1483.37C149.47,1483.37 159.73,1483.37 170.00,1483.37C180.27,1483.37 190.53,1483.37 200.80,1483.37C211.07,1483.37 221.33,1483.37 231.60,1483.37C241.87,1483.37 252.13,1483.37 262.40,1483.37C272.67,1483.37 282.93,1483.37 293.20,1483.37C303.47,1483.37 313.73,1483.37 324.00,1483.37C334.27,1483.37 344.53,1483.37 354.80,1483.37C365.07,1483.37 375.33,1483.37 385.60,1483.37C395.87,1483.37 406.13,1483.37 416.40,1483.37C426.67,1483.37 436.93,1483.37 447.20,1483.37C457.47,1483.37 467.73,1483.37 478.00,1483.37C488.27,1483.37 498.53,1483.37 508.80,1483.37C519.07,1483.37 529.33,1483.37 539.60,1483.37C549.87,1483.37 560.13,1483.37 570.40,1483.37C580.67,1483.37 590.93,1483.37 601.20,1483.37C611.47,1483.37 621.73,1483.37 632.00,1483.37C642.27,1483.37 652.53,1483.37 662.80,1483.37C673.07,1483.37 683.33,1483.37 693.60,1483.37C703.87,1483.37 714.13,1483.37 724.40,1483.37C734.67,1483.37 744.93,1483.37 755.20,1483.37C765.47,1483.37 775.73,1483.37 786.00,1483.37C796.27,1483.37 806.53,1483.37 816.80,1483.37C827.07,1483.37 837.33,1483.37 847.60,1483.37C857.87,1483.37 868.13,1483.37 878.40,1483.37C888.67,1483.37 898.93,1483.37 909.20,1483.37C919.47,1483.37 929.73,1483.37 940.00,1483.37C950.27,1483.37 960.53,1483.37 970.80,1483.37C981.07,1483.37 991.33,1483.37 1001.60,1483.37C1011.87,1483.37 1022.13,1483.37 1032.40,1483.37C1042.67,1483.37 1052.93,1483.37 1063.20,1483.37" fill="none" stroke="#73bf69" stroke-width="4" stroke-linejoin="round"/><path d="M139.20,1494.00C149.47,1494.00 159.73,1494.00 170.00,1494.00C180.27,1494.00 190.53,1494.00 200.80,1494.00C211.07,1494.00 221.33,1494.00 231.60,1494.00C241.87,1494.00 252.13,1494.00 262.40,1494.00C272.67,1494.00 282.93,1494.00 293.20,1494.00C303.47,1494.00 313.73,1494.00 324.00,1494.00C334.27,1494.00 344.53,1494.00 354.80,1494.00C365.07,1494.00 375.33,1281.40 385.60,1281.40C395.87,1281.40 406.13,1494.00 416.40,1494.00C426.67,1494.00 436.93,1494.00 447.20,1494.00C457.47,1494.00 467.73,1494.00 478.00,1494.00C488.27,1494.00 498.53,1494.00 508.80,1494.00C519.07,1494.00 529.33,1494.00 539.60,1494.00C549.87,1494.00 560.13,1494.00 570.40,1494.00C580.67,1494.00 590.93,1494.00 601.20,1494.00C611.47,1494.00 621.73,1494.00 632.00,1494.00C642.27,1494.00 652.53,1494.00 662.80,1494.00C673.07,1494.00 683.33,1494.00 693.60,1494.00C703.87,1494.00 714.13,1494.00 724.40,1494.00C734.67,1494.00 744.93,1494.00 755.20,1494.00C765.47,1494.00 775.73,1494.00 786.00,1494.00C796.27,1494.00 806.53,1494.00 816.80,1494.00C827.07,1494.00 837.33,1494.00 847.60,1494.00C857.87,1494.00 868.13,1494.00 878.40,1494.00C888.67,1494.00 898.93,1494.00 909.20,1494.00C919.47,1494.00 929.73,1494.00 940.00,1494.00C950.27,1494.00 960.53,1494.00 970.80,1494.00C981.07,1494.00 991.33,1281.40 1001.60,1281.40C1011.87,1281.40 1022.13,1494.00 1032.40,1494.00C1042.67,1494.00 1052.93,1494.00 1063.20,1494.00L1063.20,1494.00L139.20,1494.00Z" fill="url(#g12)"/><path d="M139.20,1494.00C149.47,1494.00 159.73,1494.00 170.00,1494.00C180.27,1494.00 190.53,1494.00 200.80,1494.00C211.07,1494.00 221.33,1494.00 231.60,1494.00C241.87,1494.00 252.13,1494.00 262.40,1494.00C272.67,1494.00 282.93,1494.00 293.20,1494.00C303.47,1494.00 313.73,1494.00 324.00,1494.00C334.27,1494.00 344.53,1494.00 354.80,1494.00C365.07,1494.00 375.33,1281.40 385.60,1281.40C395.87,1281.40 406.13,1494.00 416.40,1494.00C426.67,1494.00 436.93,1494.00 447.20,1494.00C457.47,1494.00 467.73,1494.00 478.00,1494.00C488.27,1494.00 498.53,1494.00 508.80,1494.00C519.07,1494.00 529.33,1494.00 539.60,1494.00C549.87,1494.00 560.13,1494.00 570.40,1494.00C580.67,1494.00 590.93,1494.00 601.20,1494.00C611.47,1494.00 621.73,1494.00 632.00,1494.00C642.27,1494.00 652.53,1494.00 662.80,1494.00C673.07,1494.00 683.33,1494.00 693.60,1494.00C703.87,1494.00 714.13,1494.00 724.40,1494.00C734.67,1494.00 744.93,1494.00 755.20,1494.00C765.47,1494.00 775.73,1494.00 786.00,1494.00C796.27,1494.00 806.53,1494.00 816.80,1494.00C827.07,1494.00 837.33,1494.00 847.60,1494.00C857.87,1494.00 868.13,1494.00 878.40,1494.00C888.67,1494.00 898.93,1494.00 909.20,1494.00C919.47,1494.00 929.73,1494.00 940.00,1494.00C950.27,1494.00 960.53,1494.00 970.80,1494.00C981.07,1494.00 991.33,1281.40 1001.60,1281.40C1011.87,1281.40 1022.13,1494.00 1032.40,1494.00C1042.67,1494.00 1052.93,1494.00 1063.20,1494.00" fill="none" stroke="#f2ca3c" stroke-width="4" stroke-linejoin="round"/></g><rect x="58" y="1561.2" width="28" height="8" rx="4" ry="4" fill="#73bf69"/><text x="102.5" y="1573.7" font-size="26.3" fill="#ccccdc" text-anchor="start" stroke="#ccccdc" stroke-width="0.3" textLength="126.5" lengthAdjust="spacing">pgbouncer</text><rect x="248" y="1561.2" width="28" height="8" rx="4" ry="4" fill="#f2ca3c"/><text x="292.5" y="1573.7" font-size="26.3" fill="#ccccdc" text-anchor="start" stroke="#ccccdc" stroke-width="0.3" textLength="101.5" lengthAdjust="spacing">postgres</text><line x1="1284.2" y1="1494.5" x2="2190.3" y2="1494.5" stroke="#2c2f34" stroke-width="1"/><text x="1274.0" y="1500.8" font-size="26.4" fill="#ccccdc" text-anchor="end" stroke="#ccccdc" stroke-width="0.3" textLength="98.6" lengthAdjust="spacing">0 clients</text><line x1="1284.2" y1="1422.5" x2="2190.3" y2="1422.5" stroke="#2c2f34" stroke-width="1"/><text x="1274.0" y="1429.7" font-size="26.4" fill="#ccccdc" text-anchor="end" stroke="#ccccdc" stroke-width="0.3" textLength="109.1" lengthAdjust="spacing">10 clients</text><line x1="1284.2" y1="1351.5" x2="2190.3" y2="1351.5" stroke="#2c2f34" stroke-width="1"/><text x="1274.0" y="1358.6" font-size="26.4" fill="#ccccdc" text-anchor="end" stroke="#ccccdc" stroke-width="0.3" textLength="113.7" lengthAdjust="spacing">20 clients</text><line x1="1284.2" y1="1280.5" x2="2190.3" y2="1280.5" stroke="#2c2f34" stroke-width="1"/><text x="1274.0" y="1287.5" font-size="26.4" fill="#ccccdc" text-anchor="end" stroke="#ccccdc" stroke-width="0.3" textLength="113.7" lengthAdjust="spacing">30 clients</text><line x1="1382.5" y1="1261" x2="1382.5" y2="1502" stroke="#2c2f34" stroke-width="1"/><text x="1381.1" y="1531.2" font-size="24.5" fill="#ccccdc" text-anchor="middle" stroke="#ccccdc" stroke-width="0.3">15:05</text><line x1="1533.5" y1="1261" x2="1533.5" y2="1502" stroke="#2c2f34" stroke-width="1"/><text x="1532.1" y="1531.2" font-size="24.5" fill="#ccccdc" text-anchor="middle" stroke="#ccccdc" stroke-width="0.3">15:10</text><line x1="1684.5" y1="1261" x2="1684.5" y2="1502" stroke="#2c2f34" stroke-width="1"/><text x="1683.1" y="1531.2" font-size="24.5" fill="#ccccdc" text-anchor="middle" stroke="#ccccdc" stroke-width="0.3">15:15</text><line x1="1835.5" y1="1261" x2="1835.5" y2="1502" stroke="#2c2f34" stroke-width="1"/><text x="1834.1" y="1531.2" font-size="24.5" fill="#ccccdc" text-anchor="middle" stroke="#ccccdc" stroke-width="0.3">15:20</text><line x1="1986.5" y1="1261" x2="1986.5" y2="1502" stroke="#2c2f34" stroke-width="1"/><text x="1985.1" y="1531.2" font-size="24.5" fill="#ccccdc" text-anchor="middle" stroke="#ccccdc" stroke-width="0.3">15:25</text><line x1="2137.5" y1="1261" x2="2137.5" y2="1502" stroke="#2c2f34" stroke-width="1"/><text x="2136.1" y="1531.2" font-size="24.5" fill="#ccccdc" text-anchor="middle" stroke="#ccccdc" stroke-width="0.3">15:30</text><g clip-path="url(#c13)"><path d="M1261.80,1494.00C1271.87,1494.00 1281.93,1494.00 1292.00,1494.00C1302.07,1494.00 1312.13,1494.00 1322.20,1494.00C1332.27,1494.00 1342.33,1494.00 1352.40,1494.00C1362.47,1494.00 1372.53,1494.00 1382.60,1494.00C1392.67,1494.00 1402.73,1494.00 1412.80,1494.00C1422.87,1494.00 1432.93,1494.00 1443.00,1494.00C1453.07,1494.00 1463.13,1494.00 1473.20,1494.00C1483.27,1494.00 1493.33,1494.00 1503.40,1494.00C1513.47,1494.00 1523.53,1494.00 1533.60,1494.00C1543.67,1494.00 1553.73,1494.00 1563.80,1494.00C1573.87,1494.00 1583.93,1494.00 1594.00,1494.00C1604.07,1494.00 1614.13,1494.00 1624.20,1494.00C1634.27,1494.00 1644.33,1494.00 1654.40,1494.00C1664.47,1494.00 1674.53,1494.00 1684.60,1494.00C1694.67,1494.00 1704.73,1494.00 1714.80,1494.00C1724.87,1494.00 1734.93,1494.00 1745.00,1494.00C1755.07,1494.00 1765.13,1494.00 1775.20,1494.00C1785.27,1494.00 1795.33,1494.00 1805.40,1494.00C1815.47,1494.00 1825.53,1494.00 1835.60,1494.00C1845.67,1494.00 1855.73,1494.00 1865.80,1494.00C1875.87,1494.00 1885.93,1494.00 1896.00,1494.00C1906.07,1494.00 1916.13,1494.00 1926.20,1494.00C1936.27,1494.00 1946.33,1494.00 1956.40,1494.00C1966.47,1494.00 1976.53,1494.00 1986.60,1494.00C1996.67,1494.00 2006.73,1494.00 2016.80,1494.00C2026.87,1494.00 2036.93,1494.00 2047.00,1494.00C2057.07,1494.00 2067.13,1494.00 2077.20,1494.00C2087.27,1494.00 2097.33,1494.00 2107.40,1494.00C2117.47,1494.00 2127.53,1494.00 2137.60,1494.00C2147.67,1494.00 2157.73,1494.00 2167.80,1494.00L2167.80,1494.00L1261.80,1494.00Z" fill="url(#g14)"/><path d="M1261.80,1494.00C1271.87,1494.00 1281.93,1494.00 1292.00,1494.00C1302.07,1494.00 1312.13,1494.00 1322.20,1494.00C1332.27,1494.00 1342.33,1494.00 1352.40,1494.00C1362.47,1494.00 1372.53,1494.00 1382.60,1494.00C1392.67,1494.00 1402.73,1494.00 1412.80,1494.00C1422.87,1494.00 1432.93,1494.00 1443.00,1494.00C1453.07,1494.00 1463.13,1494.00 1473.20,1494.00C1483.27,1494.00 1493.33,1494.00 1503.40,1494.00C1513.47,1494.00 1523.53,1494.00 1533.60,1494.00C1543.67,1494.00 1553.73,1494.00 1563.80,1494.00C1573.87,1494.00 1583.93,1494.00 1594.00,1494.00C1604.07,1494.00 1614.13,1494.00 1624.20,1494.00C1634.27,1494.00 1644.33,1494.00 1654.40,1494.00C1664.47,1494.00 1674.53,1494.00 1684.60,1494.00C1694.67,1494.00 1704.73,1494.00 1714.80,1494.00C1724.87,1494.00 1734.93,1494.00 1745.00,1494.00C1755.07,1494.00 1765.13,1494.00 1775.20,1494.00C1785.27,1494.00 1795.33,1494.00 1805.40,1494.00C1815.47,1494.00 1825.53,1494.00 1835.60,1494.00C1845.67,1494.00 1855.73,1494.00 1865.80,1494.00C1875.87,1494.00 1885.93,1494.00 1896.00,1494.00C1906.07,1494.00 1916.13,1494.00 1926.20,1494.00C1936.27,1494.00 1946.33,1494.00 1956.40,1494.00C1966.47,1494.00 1976.53,1494.00 1986.60,1494.00C1996.67,1494.00 2006.73,1494.00 2016.80,1494.00C2026.87,1494.00 2036.93,1494.00 2047.00,1494.00C2057.07,1494.00 2067.13,1494.00 2077.20,1494.00C2087.27,1494.00 2097.33,1494.00 2107.40,1494.00C2117.47,1494.00 2127.53,1494.00 2137.60,1494.00C2147.67,1494.00 2157.73,1494.00 2167.80,1494.00" fill="none" stroke="#73bf69" stroke-width="4" stroke-linejoin="round"/><path d="M1261.80,1494.00C1271.87,1494.00 1281.93,1494.00 1292.00,1494.00C1302.07,1494.00 1312.13,1494.00 1322.20,1494.00C1332.27,1494.00 1342.33,1494.00 1352.40,1494.00C1362.47,1494.00 1372.53,1494.00 1382.60,1494.00C1392.67,1494.00 1402.73,1494.00 1412.80,1494.00C1422.87,1494.00 1432.93,1494.00 1443.00,1494.00C1453.07,1494.00 1463.13,1494.00 1473.20,1494.00C1483.27,1494.00 1493.33,1280.70 1503.40,1280.70C1513.47,1280.70 1523.53,1494.00 1533.60,1494.00C1543.67,1494.00 1553.73,1494.00 1563.80,1494.00C1573.87,1494.00 1583.93,1494.00 1594.00,1494.00C1604.07,1494.00 1614.13,1494.00 1624.20,1494.00C1634.27,1494.00 1644.33,1494.00 1654.40,1494.00C1664.47,1494.00 1674.53,1494.00 1684.60,1494.00C1694.67,1494.00 1704.73,1494.00 1714.80,1494.00C1724.87,1494.00 1734.93,1494.00 1745.00,1494.00C1755.07,1494.00 1765.13,1494.00 1775.20,1494.00C1785.27,1494.00 1795.33,1494.00 1805.40,1494.00C1815.47,1494.00 1825.53,1494.00 1835.60,1494.00C1845.67,1494.00 1855.73,1494.00 1865.80,1494.00C1875.87,1494.00 1885.93,1494.00 1896.00,1494.00C1906.07,1494.00 1916.13,1494.00 1926.20,1494.00C1936.27,1494.00 1946.33,1494.00 1956.40,1494.00C1966.47,1494.00 1976.53,1494.00 1986.60,1494.00C1996.67,1494.00 2006.73,1494.00 2016.80,1494.00C2026.87,1494.00 2036.93,1494.00 2047.00,1494.00C2057.07,1494.00 2067.13,1494.00 2077.20,1494.00C2087.27,1494.00 2097.33,1280.70 2107.40,1280.70C2117.47,1280.70 2127.53,1494.00 2137.60,1494.00C2147.67,1494.00 2157.73,1494.00 2167.80,1494.00L2167.80,1494.00L1261.80,1494.00Z" fill="url(#g15)"/><path d="M1261.80,1494.00C1271.87,1494.00 1281.93,1494.00 1292.00,1494.00C1302.07,1494.00 1312.13,1494.00 1322.20,1494.00C1332.27,1494.00 1342.33,1494.00 1352.40,1494.00C1362.47,1494.00 1372.53,1494.00 1382.60,1494.00C1392.67,1494.00 1402.73,1494.00 1412.80,1494.00C1422.87,1494.00 1432.93,1494.00 1443.00,1494.00C1453.07,1494.00 1463.13,1494.00 1473.20,1494.00C1483.27,1494.00 1493.33,1280.70 1503.40,1280.70C1513.47,1280.70 1523.53,1494.00 1533.60,1494.00C1543.67,1494.00 1553.73,1494.00 1563.80,1494.00C1573.87,1494.00 1583.93,1494.00 1594.00,1494.00C1604.07,1494.00 1614.13,1494.00 1624.20,1494.00C1634.27,1494.00 1644.33,1494.00 1654.40,1494.00C1664.47,1494.00 1674.53,1494.00 1684.60,1494.00C1694.67,1494.00 1704.73,1494.00 1714.80,1494.00C1724.87,1494.00 1734.93,1494.00 1745.00,1494.00C1755.07,1494.00 1765.13,1494.00 1775.20,1494.00C1785.27,1494.00 1795.33,1494.00 1805.40,1494.00C1815.47,1494.00 1825.53,1494.00 1835.60,1494.00C1845.67,1494.00 1855.73,1494.00 1865.80,1494.00C1875.87,1494.00 1885.93,1494.00 1896.00,1494.00C1906.07,1494.00 1916.13,1494.00 1926.20,1494.00C1936.27,1494.00 1946.33,1494.00 1956.40,1494.00C1966.47,1494.00 1976.53,1494.00 1986.60,1494.00C1996.67,1494.00 2006.73,1494.00 2016.80,1494.00C2026.87,1494.00 2036.93,1494.00 2047.00,1494.00C2057.07,1494.00 2067.13,1494.00 2077.20,1494.00C2087.27,1494.00 2097.33,1280.70 2107.40,1280.70C2117.47,1280.70 2127.53,1494.00 2137.60,1494.00C2147.67,1494.00 2157.73,1494.00 2167.80,1494.00" fill="none" stroke="#f2ca3c" stroke-width="4" stroke-linejoin="round"/></g><rect x="1162" y="1561.2" width="28" height="8" rx="4" ry="4" fill="#73bf69"/><text x="1206.5" y="1573.7" font-size="26.3" fill="#ccccdc" text-anchor="start" stroke="#ccccdc" stroke-width="0.3" textLength="126.5" lengthAdjust="spacing">pgbouncer</text><rect x="1352" y="1561.2" width="28" height="8" rx="4" ry="4" fill="#f2ca3c"/><text x="1396.5" y="1573.7" font-size="26.3" fill="#ccccdc" text-anchor="start" stroke="#ccccdc" stroke-width="0.3" textLength="101.5" lengthAdjust="spacing">postgres</text><line x1="2382.6" y1="1494.5" x2="3294.3" y2="1494.5" stroke="#2c2f34" stroke-width="1"/><text x="2371.7" y="1500.8" font-size="25.2" fill="#ccccdc" text-anchor="end" stroke="#ccccdc" stroke-width="0.3" textLength="35.1" lengthAdjust="spacing">0 s</text><line x1="2382.6" y1="1377.5" x2="3294.3" y2="1377.5" stroke="#2c2f34" stroke-width="1"/><text x="2371.7" y="1383.8" font-size="25.2" fill="#ccccdc" text-anchor="end" stroke="#ccccdc" stroke-width="0.3" textLength="50.2" lengthAdjust="spacing">50 s</text><line x1="2382.6" y1="1260.5" x2="3294.3" y2="1260.5" stroke="#2c2f34" stroke-width="1"/><text x="2371.7" y="1266.8" font-size="25.2" fill="#ccccdc" text-anchor="end" stroke="#ccccdc" stroke-width="0.3" textLength="108.8" lengthAdjust="spacing">1.67 mins</text><line x1="2480.5" y1="1260" x2="2480.5" y2="1502" stroke="#2c2f34" stroke-width="1"/><text x="2479.1" y="1531.2" font-size="24.5" fill="#ccccdc" text-anchor="middle" stroke="#ccccdc" stroke-width="0.3">15:05</text><line x1="2632.5" y1="1260" x2="2632.5" y2="1502" stroke="#2c2f34" stroke-width="1"/><text x="2631.1" y="1531.2" font-size="24.5" fill="#ccccdc" text-anchor="middle" stroke="#ccccdc" stroke-width="0.3">15:10</text><line x1="2784.5" y1="1260" x2="2784.5" y2="1502" stroke="#2c2f34" stroke-width="1"/><text x="2783.1" y="1531.2" font-size="24.5" fill="#ccccdc" text-anchor="middle" stroke="#ccccdc" stroke-width="0.3">15:15</text><line x1="2936.5" y1="1260" x2="2936.5" y2="1502" stroke="#2c2f34" stroke-width="1"/><text x="2935.1" y="1531.2" font-size="24.5" fill="#ccccdc" text-anchor="middle" stroke="#ccccdc" stroke-width="0.3">15:20</text><line x1="3088.5" y1="1260" x2="3088.5" y2="1502" stroke="#2c2f34" stroke-width="1"/><text x="3087.1" y="1531.2" font-size="24.5" fill="#ccccdc" text-anchor="middle" stroke="#ccccdc" stroke-width="0.3">15:25</text><line x1="3240.5" y1="1260" x2="3240.5" y2="1502" stroke="#2c2f34" stroke-width="1"/><text x="3239.1" y="1531.2" font-size="24.5" fill="#ccccdc" text-anchor="middle" stroke="#ccccdc" stroke-width="0.3">15:30</text><g clip-path="url(#c16)"><path d="M2359.00,1494.00C2369.13,1494.00 2379.27,1494.00 2389.40,1494.00C2399.53,1494.00 2409.67,1494.00 2419.80,1494.00C2429.93,1494.00 2440.07,1494.00 2450.20,1494.00C2460.33,1494.00 2470.47,1494.00 2480.60,1494.00C2490.73,1494.00 2500.87,1494.00 2511.00,1494.00C2521.13,1494.00 2531.27,1494.00 2541.40,1494.00C2551.53,1494.00 2561.67,1494.00 2571.80,1494.00C2581.93,1494.00 2592.07,1494.00 2602.20,1494.00C2612.33,1494.00 2622.47,1494.00 2632.60,1494.00C2642.73,1494.00 2652.87,1494.00 2663.00,1494.00C2673.13,1494.00 2683.27,1494.00 2693.40,1494.00C2703.53,1494.00 2713.67,1494.00 2723.80,1494.00C2733.93,1494.00 2744.07,1494.00 2754.20,1494.00C2764.33,1494.00 2774.47,1494.00 2784.60,1494.00C2794.73,1494.00 2804.87,1494.00 2815.00,1494.00C2825.13,1494.00 2835.27,1494.00 2845.40,1494.00C2855.53,1494.00 2865.67,1494.00 2875.80,1494.00C2885.93,1494.00 2896.07,1494.00 2906.20,1494.00C2916.33,1494.00 2926.47,1494.00 2936.60,1494.00C2946.73,1494.00 2956.87,1494.00 2967.00,1494.00C2977.13,1494.00 2987.27,1494.00 2997.40,1494.00C3007.53,1494.00 3017.67,1494.00 3027.80,1494.00C3037.93,1494.00 3048.07,1494.00 3058.20,1494.00C3068.33,1494.00 3078.47,1494.00 3088.60,1494.00C3098.73,1494.00 3108.87,1494.00 3119.00,1494.00C3129.13,1494.00 3139.27,1494.00 3149.40,1494.00C3159.53,1494.00 3169.67,1494.00 3179.80,1494.00C3189.93,1494.00 3200.07,1494.00 3210.20,1494.00C3220.33,1494.00 3230.47,1494.00 3240.60,1494.00C3250.73,1494.00 3260.87,1494.00 3271.00,1494.00L3271.00,1494.00L2359.00,1494.00Z" fill="url(#g17)"/><path d="M2359.00,1494.00C2369.13,1494.00 2379.27,1494.00 2389.40,1494.00C2399.53,1494.00 2409.67,1494.00 2419.80,1494.00C2429.93,1494.00 2440.07,1494.00 2450.20,1494.00C2460.33,1494.00 2470.47,1494.00 2480.60,1494.00C2490.73,1494.00 2500.87,1494.00 2511.00,1494.00C2521.13,1494.00 2531.27,1494.00 2541.40,1494.00C2551.53,1494.00 2561.67,1494.00 2571.80,1494.00C2581.93,1494.00 2592.07,1494.00 2602.20,1494.00C2612.33,1494.00 2622.47,1494.00 2632.60,1494.00C2642.73,1494.00 2652.87,1494.00 2663.00,1494.00C2673.13,1494.00 2683.27,1494.00 2693.40,1494.00C2703.53,1494.00 2713.67,1494.00 2723.80,1494.00C2733.93,1494.00 2744.07,1494.00 2754.20,1494.00C2764.33,1494.00 2774.47,1494.00 2784.60,1494.00C2794.73,1494.00 2804.87,1494.00 2815.00,1494.00C2825.13,1494.00 2835.27,1494.00 2845.40,1494.00C2855.53,1494.00 2865.67,1494.00 2875.80,1494.00C2885.93,1494.00 2896.07,1494.00 2906.20,1494.00C2916.33,1494.00 2926.47,1494.00 2936.60,1494.00C2946.73,1494.00 2956.87,1494.00 2967.00,1494.00C2977.13,1494.00 2987.27,1494.00 2997.40,1494.00C3007.53,1494.00 3017.67,1494.00 3027.80,1494.00C3037.93,1494.00 3048.07,1494.00 3058.20,1494.00C3068.33,1494.00 3078.47,1494.00 3088.60,1494.00C3098.73,1494.00 3108.87,1494.00 3119.00,1494.00C3129.13,1494.00 3139.27,1494.00 3149.40,1494.00C3159.53,1494.00 3169.67,1494.00 3179.80,1494.00C3189.93,1494.00 3200.07,1494.00 3210.20,1494.00C3220.33,1494.00 3230.47,1494.00 3240.60,1494.00C3250.73,1494.00 3260.87,1494.00 3271.00,1494.00" fill="none" stroke="#73bf69" stroke-width="4" stroke-linejoin="round"/><path d="M2359.00,1494.00C2369.13,1494.00 2379.27,1494.00 2389.40,1494.00C2399.53,1494.00 2409.67,1494.00 2419.80,1494.00C2429.93,1494.00 2440.07,1494.00 2450.20,1494.00C2460.33,1494.00 2470.47,1494.00 2480.60,1494.00C2490.73,1494.00 2500.87,1494.00 2511.00,1494.00C2521.13,1494.00 2531.27,1494.00 2541.40,1494.00C2551.53,1494.00 2561.67,1494.00 2571.80,1494.00C2581.93,1494.00 2592.07,1494.00 2602.20,1494.00C2612.33,1494.00 2622.47,1494.00 2632.60,1494.00C2642.73,1494.00 2652.87,1494.00 2663.00,1494.00C2673.13,1494.00 2683.27,1494.00 2693.40,1494.00C2703.53,1494.00 2713.67,1494.00 2723.80,1494.00C2733.93,1494.00 2744.07,1494.00 2754.20,1494.00C2764.33,1494.00 2774.47,1494.00 2784.60,1494.00C2794.73,1494.00 2804.87,1494.00 2815.00,1494.00C2825.13,1494.00 2835.27,1494.00 2845.40,1494.00C2855.53,1494.00 2865.67,1494.00 2875.80,1494.00C2885.93,1494.00 2896.07,1494.00 2906.20,1494.00C2916.33,1494.00 2926.47,1494.00 2936.60,1494.00C2946.73,1494.00 2956.87,1494.00 2967.00,1494.00C2977.13,1494.00 2987.27,1494.00 2997.40,1494.00C3007.53,1494.00 3017.67,1494.00 3027.80,1494.00C3037.93,1494.00 3048.07,1494.00 3058.20,1494.00C3068.33,1494.00 3078.47,1494.00 3088.60,1494.00C3098.73,1494.00 3108.87,1494.00 3119.00,1494.00C3129.13,1494.00 3139.27,1494.00 3149.40,1494.00C3159.53,1494.00 3169.67,1494.00 3179.80,1494.00C3189.93,1494.00 3200.07,1494.00 3210.20,1494.00C3220.33,1494.00 3230.47,1494.00 3240.60,1494.00C3250.73,1494.00 3260.87,1494.00 3271.00,1494.00L3271.00,1494.00L2359.00,1494.00Z" fill="url(#g18)"/><path d="M2359.00,1494.00C2369.13,1494.00 2379.27,1494.00 2389.40,1494.00C2399.53,1494.00 2409.67,1494.00 2419.80,1494.00C2429.93,1494.00 2440.07,1494.00 2450.20,1494.00C2460.33,1494.00 2470.47,1494.00 2480.60,1494.00C2490.73,1494.00 2500.87,1494.00 2511.00,1494.00C2521.13,1494.00 2531.27,1494.00 2541.40,1494.00C2551.53,1494.00 2561.67,1494.00 2571.80,1494.00C2581.93,1494.00 2592.07,1494.00 2602.20,1494.00C2612.33,1494.00 2622.47,1494.00 2632.60,1494.00C2642.73,1494.00 2652.87,1494.00 2663.00,1494.00C2673.13,1494.00 2683.27,1494.00 2693.40,1494.00C2703.53,1494.00 2713.67,1494.00 2723.80,1494.00C2733.93,1494.00 2744.07,1494.00 2754.20,1494.00C2764.33,1494.00 2774.47,1494.00 2784.60,1494.00C2794.73,1494.00 2804.87,1494.00 2815.00,1494.00C2825.13,1494.00 2835.27,1494.00 2845.40,1494.00C2855.53,1494.00 2865.67,1494.00 2875.80,1494.00C2885.93,1494.00 2896.07,1494.00 2906.20,1494.00C2916.33,1494.00 2926.47,1494.00 2936.60,1494.00C2946.73,1494.00 2956.87,1494.00 2967.00,1494.00C2977.13,1494.00 2987.27,1494.00 2997.40,1494.00C3007.53,1494.00 3017.67,1494.00 3027.80,1494.00C3037.93,1494.00 3048.07,1494.00 3058.20,1494.00C3068.33,1494.00 3078.47,1494.00 3088.60,1494.00C3098.73,1494.00 3108.87,1494.00 3119.00,1494.00C3129.13,1494.00 3139.27,1494.00 3149.40,1494.00C3159.53,1494.00 3169.67,1494.00 3179.80,1494.00C3189.93,1494.00 3200.07,1494.00 3210.20,1494.00C3220.33,1494.00 3230.47,1494.00 3240.60,1494.00C3250.73,1494.00 3260.87,1494.00 3271.00,1494.00" fill="none" stroke="#f2ca3c" stroke-width="4" stroke-linejoin="round"/></g><rect x="2266" y="1561.2" width="28" height="8" rx="4" ry="4" fill="#73bf69"/><text x="2310.5" y="1573.7" font-size="26.3" fill="#ccccdc" text-anchor="start" stroke="#ccccdc" stroke-width="0.3" textLength="126.5" lengthAdjust="spacing">pgbouncer</text><rect x="2456" y="1561.2" width="28" height="8" rx="4" ry="4" fill="#f2ca3c"/><text x="2500.5" y="1573.7" font-size="26.3" fill="#ccccdc" text-anchor="start" stroke="#ccccdc" stroke-width="0.3" textLength="101.5" lengthAdjust="spacing">postgres</text><rect x="0" y="0" width="3356" height="82" fill="#181b1f"/><rect x="0" y="0" width="3356" height="2" fill="#172c35"/><rect x="0" y="80" width="3356" height="2" fill="#2e3036"/><line x1="38" y1="31" x2="74" y2="31" stroke="#ccccdc" stroke-width="4" stroke-linecap="round"/><line x1="38" y1="41" x2="74" y2="41" stroke="#ccccdc" stroke-width="4" stroke-linecap="round"/><line x1="38" y1="51" x2="74" y2="51" stroke="#ccccdc" stroke-width="4" stroke-linecap="round"/><text x="111.0" y="51.4" font-size="30.5" fill="#ccccdc" text-anchor="start" stroke="#ccccdc" stroke-width="0.5" textLength="80.3" lengthAdjust="spacing">Home</text><path d="M212.5,37 L219.5,43 L212.5,49" fill="none" stroke="#8e8e9a" stroke-width="2.6" stroke-linecap="round" stroke-linejoin="round"/><text x="239.3" y="51.4" font-size="30.5" fill="#ccccdc" text-anchor="start" stroke="#ccccdc" stroke-width="0.5" textLength="161.5" lengthAdjust="spacing">Dashboards</text><path d="M422.5,37 L429.5,43 L422.5,49" fill="none" stroke="#8e8e9a" stroke-width="2.6" stroke-linecap="round" stroke-linejoin="round"/><text x="448.4" y="51.4" font-size="30.5" fill="#ccccdc" text-anchor="start" stroke="#ccccdc" stroke-width="0.5" textLength="324" lengthAdjust="spacing">Integration - PgBouncer</text><path d="M792.5,37 L799.5,43 L792.5,49" fill="none" stroke="#8e8e9a" stroke-width="2.6" stroke-linecap="round" stroke-linejoin="round"/><text x="820.0" y="51.4" font-size="30.5" fill="#8e8e9a" text-anchor="start" stroke="#8e8e9a" stroke-width="0.5" textLength="278.7" lengthAdjust="spacing">PgBouncer overview</text><polygon points="1151.00,26.00 1155.23,35.68 1165.74,36.71 1157.85,43.72 1160.11,54.04 1151.00,48.70 1141.89,54.04 1144.15,43.72 1136.26,36.71 1146.77,35.68" fill="none" stroke="#ccccdc" stroke-width="3" stroke-linejoin="round"/><circle cx="2050" cy="41" r="13.8" fill="none" stroke="#8e8e9a" stroke-width="2.5"/><circle cx="2050" cy="36.06341463414634" r="1.96" fill="#8e8e9a"/><line x1="2050" y1="41.34" x2="2050" y2="46.50" stroke="#8e8e9a" stroke-width="3.03" stroke-linecap="round"/><path d="M2128.5,28.5 H2141.5 L2150.5,37.5 V50.5 Q2150.5,53.5 2147.5,53.5 H2128.5 Q2125.5,53.5 2125.5,50.5 V31.5 Q2125.5,28.5 2128.5,28.5 Z" fill="none" stroke="#8e8e9a" stroke-width="2.8" stroke-linejoin="round"/><path d="M2131.5,28.5 V35.5 H2141.5 V28.5" fill="none" stroke="#8e8e9a" stroke-width="2.8"/><path d="M2131.5,53.5 V46 Q2131.5,43.5 2134,43.5 H2142.5 Q2145,43.5 2145,46 V53.5" fill="none" stroke="#8e8e9a" stroke-width="2.8"/><path d="M2222.08,31.47 L2222.94,27.34 L2229.06,27.34 L2229.92,31.47 L2229.97,31.49 L2233.50,29.18 L2237.82,33.50 L2235.51,37.03 L2235.53,37.08 L2239.66,37.94 L2239.66,44.06 L2235.53,44.92 L2235.51,44.97 L2237.82,48.50 L2233.50,52.82 L2229.97,50.51 L2229.92,50.53 L2229.06,54.66 L2222.94,54.66 L2222.08,50.53 L2222.03,50.51 L2218.50,52.82 L2214.18,48.50 L2216.49,44.97 L2216.47,44.92 L2212.34,44.06 L2212.34,37.94 L2216.47,37.08 L2216.49,37.03 L2214.18,33.50 L2218.50,29.18 L2222.03,31.49Z" fill="none" stroke="#8e8e9a" stroke-width="2.8" stroke-linejoin="round"/><circle cx="2226" cy="41" r="4.6" fill="none" stroke="#8e8e9a" stroke-width="2.7"/><rect x="2279" y="18" width="113" height="46" rx="3" fill="none" stroke="#4b4d53" stroke-width="2"/><text x="2294.5" y="49.3" font-size="25" fill="#ccccdc" text-anchor="start" stroke="#ccccdc" stroke-width="1.0" textLength="47.5" lengthAdjust="spacing">Add</text><path d="M2352,37.5 L2359,44.5 L2366,37.5" fill="none" stroke="#ccccdc" stroke-width="2.8" stroke-linecap="round" stroke-linejoin="round"/><rect x="2409" y="17" width="100" height="48" rx="3" fill="#3d71d9"/><text x="2425.5" y="49.3" font-size="25" fill="#ffffff" text-anchor="start" stroke="#ffffff" stroke-width="1.0" textLength="67.5" lengthAdjust="spacing">Share</text><rect x="2525" y="17" width="2" height="48" fill="#3b3d42"/><rect x="3258" y="17" width="2" height="48" fill="#3b3d42"/><circle cx="2579" cy="41" r="13.6" fill="none" stroke="#8e8e9a" stroke-width="2.8"/><path d="M2579,33.5 V42 H2573" fill="none" stroke="#8e8e9a" stroke-width="2.8" stroke-linecap="round" stroke-linejoin="round"/><text x="2612.0" y="50.7" font-size="30" fill="#8e8e9a" text-anchor="start" stroke="#8e8e9a" stroke-width="0.6" textLength="217" lengthAdjust="spacing">Last 30 minutes</text><path d="M2861,37.5 L2867,43.5 L2873,37.5" fill="none" stroke="#8e8e9a" stroke-width="2.6" stroke-linecap="round" stroke-linejoin="round"/><circle cx="2933" cy="39.5" r="12.2" fill="none" stroke="#8e8e9a" stroke-width="2.8"/><line x1="2927" y1="39.5" x2="2939" y2="39.5" stroke="#8e8e9a" stroke-width="2.8" stroke-linecap="round"/><line x1="2942" y1="48.5" x2="2949" y2="55" stroke="#8e8e9a" stroke-width="2.8" stroke-linecap="round"/><path d="M3036.8,41 A13.3,13.3 0 0 0 3012.8,33.2" fill="none" stroke="#8e8e9a" stroke-width="2.8" stroke-linecap="round"/><path d="M3011,27.2 V34.6 H3018.4" fill="none" stroke="#8e8e9a" stroke-width="2.8" stroke-linecap="round" stroke-linejoin="round"/><path d="M3010.2,41 A13.3,13.3 0 0 0 3034.2,48.8" fill="none" stroke="#8e8e9a" stroke-width="2.8" stroke-linecap="round"/><path d="M3028.4,47.2 H3035.6 V54.8" fill="none" stroke="#8e8e9a" stroke-width="2.8" stroke-linecap="round" stroke-linejoin="round"/><text x="3072.0" y="51.0" font-size="28.5" fill="#8e8e9a" text-anchor="start" stroke="#8e8e9a" stroke-width="0.6">1m</text><path d="M3130,37.5 L3136,43.5 L3142,37.5" fill="none" stroke="#8e8e9a" stroke-width="2.6" stroke-linecap="round" stroke-linejoin="round"/><rect x="3200.5" y="27.4" width="27" height="21.2" rx="3.2" fill="none" stroke="#8e8e9a" stroke-width="2.8"/><line x1="3201" y1="42.6" x2="3227" y2="42.6" stroke="#8e8e9a" stroke-width="2.6"/><path d="M3210,47.5 L3209,52.5 Q3208.5,54.5 3211,54.5 H3218 Q3220.5,54.5 3220,52.5 L3219,47.5" fill="none" stroke="#8e8e9a" stroke-width="2.6" stroke-linejoin="round"/><path d="M3301,38.5 L3310,47.5 L3319,38.5" fill="none" stroke="#8e8e9a" stroke-width="4" stroke-linecap="round" stroke-linejoin="round"/></svg>
</body></html>
